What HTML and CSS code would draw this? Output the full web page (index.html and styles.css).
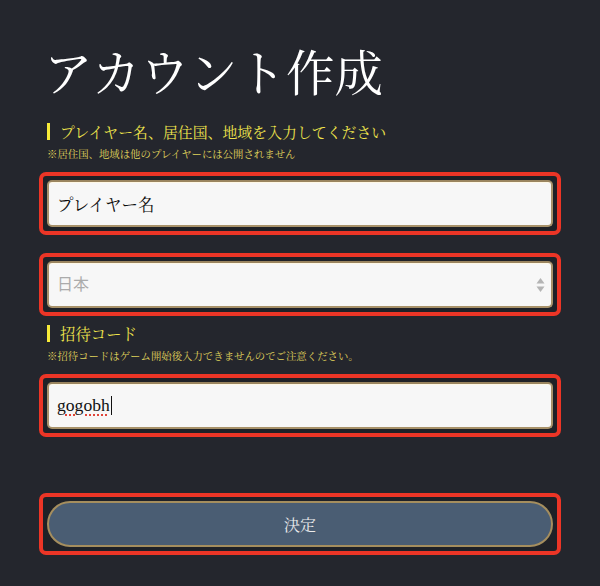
FILE: index.html
```html
<!DOCTYPE html>
<html lang="ja">
<head>
<meta charset="utf-8">
<title>アカウント作成</title>
<link rel="stylesheet" href="styles.css">
</head>
<body>
<main class="page">
  <h1 class="title">アカウント作成</h1>

  <h2 class="label label-first">プレイヤー名、居住国、地域を入力してください</h2>
  <p class="note">※居住国、地域は他のプレイヤーには公開されません</p>

  <div class="mark mark-first">
    <div class="field field-name">プレイヤー名</div>
  </div>

  <div class="mark mark-second">
    <div class="field field-select">
      <span class="placeholder">日本</span>
      <span class="spinner">
        <svg width="9" height="16" viewBox="0 0 9 16"><path d="M4.5 1 L8.5 6.5 L0.5 6.5 Z" fill="#b4b4b4"/><path d="M4.5 15 L8.5 9.5 L0.5 9.5 Z" fill="#b4b4b4"/></svg>
      </span>
    </div>
  </div>

  <h2 class="label label-second">招待コード</h2>
  <p class="note">※招待コードはゲーム開始後入力できませんのでご注意ください。</p>

  <div class="mark mark-third">
    <div class="field field-code"><span class="misspelled">gogobh</span><span class="caret"></span></div>
  </div>

  <div class="mark mark-button">
    <button class="submit" type="button">決定</button>
  </div>
</main>
</body>
</html>
```

FILE: styles.css
```css
html, body {
  margin: 0;
  padding: 0;
}

body {
  background: #24262d;
  width: 600px;
  height: 586px;
  overflow: hidden;
  font-family: "Noto Serif CJK JP", "Noto Sans CJK JP", serif;
}

.page {
  padding: 46px 39px 0 39px;
  display: flex;
  flex-direction: column;
}

.title {
  margin: 0 0 0 5px;
  font-size: 48.5px;
  line-height: 49px;
  font-weight: 400;
  color: #ffffff;
}

.label {
  margin: 0 0 0 8px;
  padding-left: 10px;
  border-left: 3px solid #f6ea38;
  font-size: 14.9px;
  line-height: 17px;
  font-weight: 400;
  color: #efe44c;
}

.label-first {
  margin-top: 28px;
}

.label-second {
  margin-top: 9px;
  font-size: 15.4px;
}

.note {
  margin: 7px 0 0 8px;
  font-size: 10.4px;
  line-height: 14px;
  color: #e0d55c;
  white-space: nowrap;
}

.mark {
  border: 4px solid #ec3526;
  border-radius: 7px;
  padding: 4px;
  background: #1f2127;
}

.mark-first {
  margin-top: 11px;
}

.mark-second {
  margin-top: 18px;
}

.mark-third {
  margin-top: 11px;
}

.mark-button {
  margin-top: 56px;
}

.field {
  box-sizing: border-box;
  height: 47px;
  border: 2px solid #a8926a;
  border-top-color: #9a8560;
  border-radius: 5px;
  background: #f7f7f7;
  box-shadow: inset 0 1px 0 #fff8e6;
  padding: 0 8px;
  display: flex;
  align-items: center;
  font-size: 16px;
  color: #111111;
}

.field-name {
  font-size: 16.5px;
  color: #0c0c0c;
}

.field-select {
  justify-content: space-between;
  padding-right: 6px;
  font-family: "Noto Sans CJK JP", sans-serif;
}

.placeholder {
  color: #ababab;
  margin-top: -3px;
}

.spinner {
  display: flex;
  align-items: center;
}

.field-code {
  font-family: "Liberation Serif", serif;
  font-size: 17.6px;
}

.misspelled {
  text-decoration: underline dotted #e0453a;
  text-decoration-thickness: 2px;
  text-underline-offset: 3px;
}

.caret {
  display: inline-block;
  width: 1px;
  height: 19px;
  margin-left: 1px;
  background: #111111;
}

.submit {
  box-sizing: border-box;
  width: 100%;
  height: 46px;
  border: 2px solid #a58e5e;
  border-radius: 24px;
  background: #4a5d73;
  color: #ececec;
  font-family: "Noto Serif CJK JP", "Noto Sans CJK JP", serif;
  font-size: 16px;
  padding: 0;
  display: block;
}
```
